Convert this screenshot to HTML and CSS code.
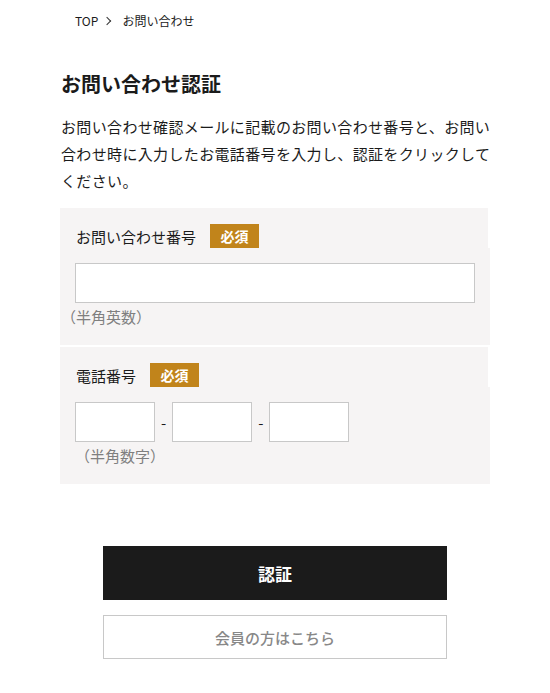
FILE: index.html
```html
<!DOCTYPE html>
<html lang="ja">
<head>
    <meta charset="UTF-8">
    <meta name="viewport" content="width=device-width, initial-scale=1.0">
    <title>お問い合わせ認証</title>
    <link rel="stylesheet" href="styles.css">
</head>
<body>
    <nav class="breadcrumb">
        <a href="#">TOP</a>
        <span class="breadcrumb-sep"></span>
        <span>お問い合わせ</span>
    </nav>

    <main class="container">
        <h1 class="page-title">お問い合わせ認証</h1>
        <p class="lead">お問い合わせ確認メールに記載のお問い合わせ番号と、お問い合わせ時に入力したお電話番号を入力し、認証をクリックしてください。</p>

        <form class="auth-form">
            <dl class="field">
                <dt class="field-head">
                    <label for="inquiryNo">お問い合わせ番号</label>
                    <span class="badge">必須</span>
                </dt>
                <dd class="field-body">
                    <input type="text" id="inquiryNo" class="input input-wide">
                    <p class="hint hint-outdent">（半角英数）</p>
                </dd>
            </dl>

            <dl class="field">
                <dt class="field-head">
                    <label for="tel1">電話番号</label>
                    <span class="badge">必須</span>
                </dt>
                <dd class="field-body">
                    <div class="tel-row">
                        <input type="text" id="tel1" class="input input-tel">
                        <span class="tel-dash">-</span>
                        <input type="text" class="input input-tel">
                        <span class="tel-dash">-</span>
                        <input type="text" class="input input-tel">
                    </div>
                    <p class="hint">（半角数字）</p>
                </dd>
            </dl>

            <div class="actions">
                <button type="submit" class="btn btn-primary">認証</button>
                <a href="#" class="btn btn-secondary">会員の方はこちら</a>
            </div>
        </form>
    </main>
</body>
</html>
```

FILE: styles.css
```css
body {
    font-family: "Noto Sans CJK JP", "Noto Sans", sans-serif;
    color: #1b1b1b;
    background-color: #fff;
    margin: 0;
    padding: 0;
}

a {
    color: inherit;
    text-decoration: none;
}

.breadcrumb {
    display: flex;
    align-items: center;
    padding: 12px 0 0 75px;
    font-size: 12px;
    line-height: 18px;
}

.breadcrumb-sep {
    width: 5px;
    height: 5px;
    border-top: 1.5px solid #333;
    border-right: 1.5px solid #333;
    transform: rotate(45deg);
    margin: 0 12px 0 6px;
}

.container {
    width: 430px;
    margin: 0 auto;
}

.page-title {
    font-size: 20px;
    line-height: 27px;
    font-weight: bold;
    margin: 40px 0 0 1px;
}

.lead {
    font-size: 15px;
    line-height: 27px;
    letter-spacing: 0.35px;
    margin: 16px 0 0 1px;
    width: 430px;
}

.auth-form {
    margin-top: 14px;
}

.field {
    margin: 0 0 2px;
}

.field-head {
    display: flex;
    align-items: center;
    width: 428px;
    height: 40px;
    box-sizing: border-box;
    padding: 16px 0 0 16px;
    background-color: #f6f4f4;
    font-size: 15px;
}

.badge {
    display: inline-block;
    width: 49px;
    height: 24px;
    line-height: 24px;
    margin-left: 14px;
    background-color: #c1841b;
    color: #fff;
    font-size: 14px;
    font-weight: bold;
    text-align: center;
}

.field-body {
    margin: 0;
    padding: 15px 15px 16px;
    background-color: #f6f4f4;
}

.input {
    display: block;
    height: 40px;
    box-sizing: border-box;
    border: 1px solid #c8c8c8;
    background-color: #fff;
    margin: 0;
    font-size: 15px;
}

.input-wide {
    width: 400px;
}

.tel-row {
    display: flex;
    align-items: center;
}

.input-tel {
    width: 80px;
}

.tel-dash {
    font-size: 15px;
    padding: 0 6px;
}

.hint {
    font-size: 15px;
    line-height: 24px;
    color: #7f7f7f;
    margin: 2px 0 0;
}

.hint-outdent {
    margin-left: -14px;
}

.actions {
    display: flex;
    flex-direction: column;
    align-items: center;
    gap: 15px;
    margin-top: 62px;
}

.btn {
    display: flex;
    align-items: center;
    justify-content: center;
    width: 344px;
    box-sizing: border-box;
    font-family: inherit;
    cursor: pointer;
}

.btn-primary {
    height: 54px;
    border: none;
    background-color: #1b1b1b;
    color: #fff;
    font-size: 17px;
    font-weight: bold;
}

.btn-secondary {
    height: 44px;
    border: 1px solid #c8c8c8;
    color: #888;
    font-size: 15px;
    font-weight: 500;
}
```
